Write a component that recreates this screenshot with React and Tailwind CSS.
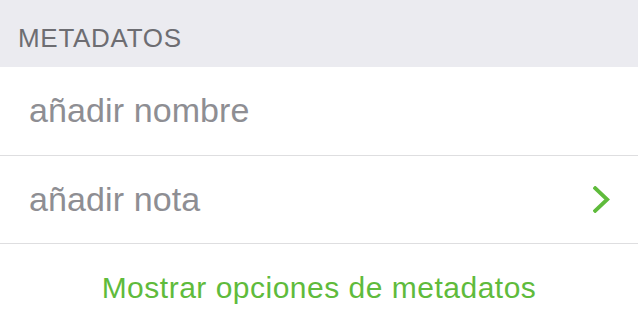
export default function App() {
  return (
    <div className="w-[638px] h-[325px] bg-white overflow-hidden" style={{ fontFamily: '"Liberation Sans", Arial, sans-serif' }}>
      <div className="h-[67px] bg-[#ebebf0] flex items-end pl-[18px] pb-[16px]">
        <span className="text-[26px] leading-none tracking-[0.7px] text-[#6d6d72]">METADATOS</span>
      </div>
      <div className="h-[89px] border-b border-[#dedee0] flex items-center pl-[29px] pb-[3px]">
        <span className="text-[34px] leading-none tracking-[0.1px] text-[#8e8e93]">añadir nombre</span>
      </div>
      <div className="h-[88px] border-b border-[#dedee0] flex items-center justify-between pl-[29px] pr-[28px]">
        <span className="text-[34px] leading-none tracking-[0.1px] text-[#8e8e93] pb-[1px]">añadir nota</span>
        <svg width="17" height="27" viewBox="0 0 17 27" fill="none">
          <polyline points="2.2,2.2 14.2,13.5 2.2,24.8" stroke="#5fbb3c" strokeWidth="3.8" strokeLinecap="square" strokeLinejoin="miter" />
        </svg>
      </div>
      <div className="flex justify-center pt-[29px]">
        <span className="text-[30px] leading-none tracking-[0.5px] text-[#5fbb3c]">Mostrar opciones de metadatos</span>
      </div>
    </div>
  );
}
